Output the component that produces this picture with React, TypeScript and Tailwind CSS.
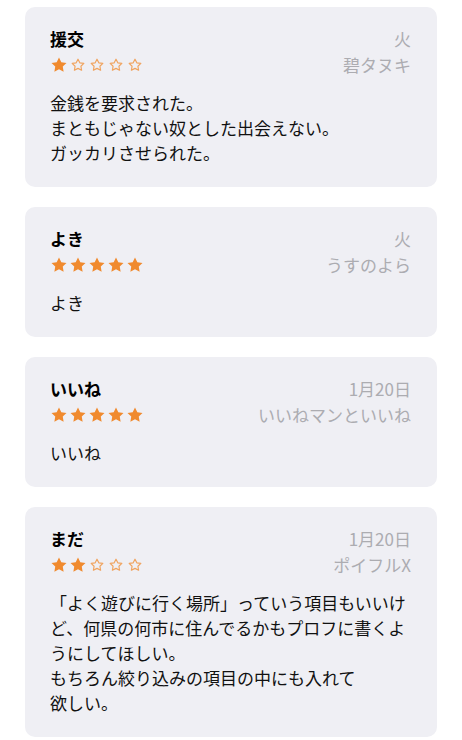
import React from "react";

type Review = {
  title: string;
  rating: number;
  date: string;
  author: string;
  body: string[];
};

const reviews: Review[] = [
  {
    title: "援交",
    rating: 1,
    date: "火",
    author: "碧タヌキ",
    body: ["金銭を要求された。", "まともじゃない奴とした出会えない。", "ガッカリさせられた。"],
  },
  { title: "よき", rating: 5, date: "火", author: "うすのよら", body: ["よき"] },
  { title: "いいね", rating: 5, date: "1月20日", author: "いいねマンといいね", body: ["いいね"] },
  {
    title: "まだ",
    rating: 2,
    date: "1月20日",
    author: "ポイフルX",
    body: [
      "「よく遊びに行く場所」っていう項目もいいけ",
      "ど、何県の何市に住んでるかもプロフに書くよ",
      "うにしてほしい。",
      "もちろん絞り込みの項目の中にも入れて",
      "欲しい。",
    ],
  },
];

const STAR = "12,2 15.09,8.26 22,9.27 17,14.14 18.18,21.02 12,17.77 5.82,21.02 7,14.14 2,9.27 8.91,8.26";

function Star({ filled }: { filled: boolean }) {
  return (
    <span className="flex w-[19px] h-[26px] items-center justify-center">
      {filled ? (
        <svg width="18" height="18" viewBox="0 0 24 24">
          <polygon points={STAR} fill="#f08a2e" />
        </svg>
      ) : (
        <svg width="14" height="14" viewBox="0 0 24 24">
          <polygon points={STAR} fill="none" stroke="#f0a35e" strokeWidth="2" strokeLinejoin="round" />
        </svg>
      )}
    </span>
  );
}

function Card({ r }: { r: Review }) {
  return (
    <div className="rounded-[10px] bg-[#efeff4] pl-[25px] pr-[26px] pt-[19px] pb-[22px]">
      <div className="flex items-center justify-between h-[26px] leading-[26px]">
        <span className="font-bold text-[17px] text-black">{r.title}</span>
        <span className="text-[17px] text-[#acacb1]">{r.date}</span>
      </div>
      <div className="flex items-center justify-between h-[26px] leading-[26px]">
        <div className="flex -ml-[1px]">
          {[0, 1, 2, 3, 4].map((i) => (
            <Star key={i} filled={i < r.rating} />
          ))}
        </div>
        <span className="text-[17px] text-[#acacb1]">{r.author}</span>
      </div>
      <div className="mt-[12px] text-[17px] leading-[25px] text-[#111111]">
        {r.body.map((l, i) => (
          <div key={i} className="whitespace-nowrap">
            {l}
          </div>
        ))}
      </div>
    </div>
  );
}

export default function App() {
  return (
    <div
      className="min-h-[740px] w-[462px] bg-white px-[25px] pt-[7px] flex flex-col gap-[20px]"
      style={{ fontFamily: '"Noto Sans CJK JP", "Noto Sans", sans-serif' }}
    >
      {reviews.map((r, i) => (
        <Card key={i} r={r} />
      ))}
    </div>
  );
}
